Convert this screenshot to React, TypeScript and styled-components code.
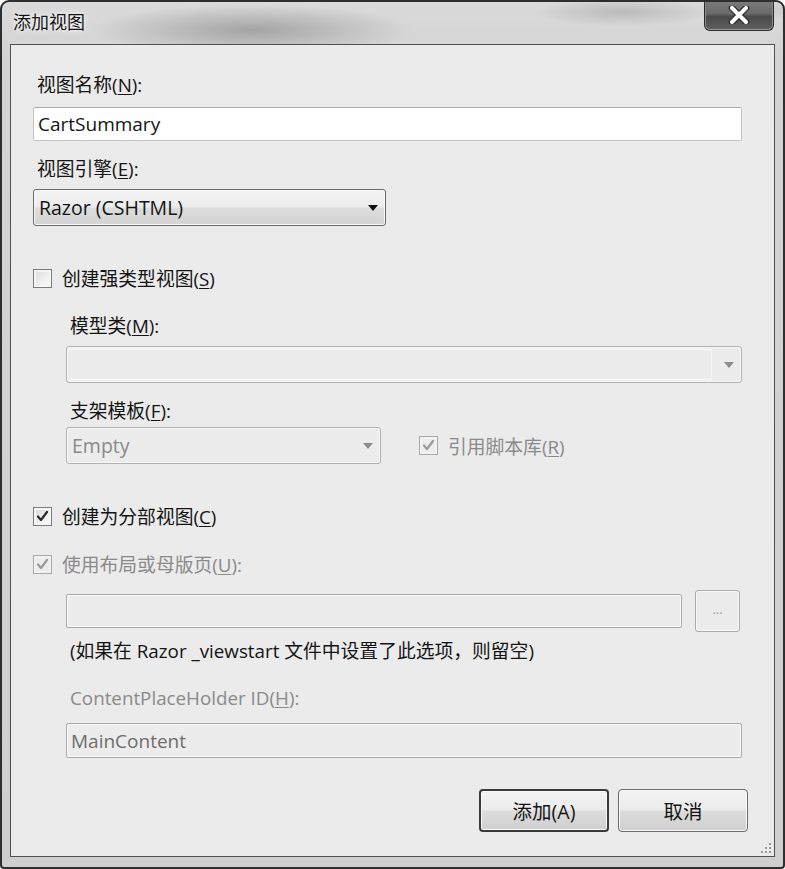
import React from "react";
import styled, { createGlobalStyle, css } from "styled-components";

const Global = createGlobalStyle`
  html, body { margin: 0; padding: 0; background: #ffffff; }
  body { font-family: "Open Sans", "Noto Sans CJK SC", sans-serif; }
  * { box-sizing: border-box; }
`;

const FONT = `"Open Sans", "Noto Sans CJK SC", sans-serif`;

const Window = styled.div`
  position: relative;
  width: 785px;
  height: 869px;
  display: flex;
  flex-direction: column;
  border: 2px solid #2e2e2e;
  border-radius: 9px 9px 4px 4px;
  background:
    radial-gradient(ellipse 160px 26px at 250px 28px, rgba(130,130,130,0.6), rgba(130,130,130,0) 100%),
    radial-gradient(ellipse 90px 14px at 620px 10px, rgba(150,150,150,0.45), rgba(150,150,150,0) 100%),
    radial-gradient(ellipse 200px 10px at 900px 8px, rgba(150,150,150,0.4), rgba(150,150,150,0) 100%),
    linear-gradient(180deg, #dadada 0%, #d3d3d3 60px, #cfcfcf 100%);
  overflow: hidden;
  font-family: ${FONT};
`;

const TitleBar = styled.div`
  height: 42px;
  flex: none;
  display: flex;
  align-items: flex-start;
  justify-content: space-between;
  padding-left: 11px;
  padding-right: 9px;
`;

const Title = styled.div`
  margin-top: 8px;
  font-size: 18px;
  line-height: 24px;
  color: #141414;
  text-shadow: 0 0 6px #f4f4f4, 0 0 3px #ffffff;
`;

const CloseButton = styled.div`
  margin-top: -2px;
  width: 70px;
  height: 31px;
  border: 1px solid #2a2a2a;
  border-top: none;
  border-radius: 0 0 6px 6px;
  background: linear-gradient(180deg, #7c7c7c 0%, #6a6a6a 45%, #4a4a4a 55%, #5e5e5e 100%);
  box-shadow: inset 0 -1px 0 #9a9a9a, inset 1px 0 0 #8a8a8a, inset -1px 0 0 #8a8a8a;
  display: flex;
  align-items: center;
  justify-content: center;
`;

const Client = styled.div`
  position: relative;
  flex: 1;
  margin: 0 8px 10px 8px;
  border: 1px solid #505050;
  background: #ebebeb;
  padding: 28px 32px 0 22px;
  display: flex;
  flex-direction: column;
  color: #141414;
`;

const Label = styled.div<{ $top: number; $disabled?: boolean; $indent?: number }>`
  margin-top: ${(p) => p.$top}px;
  margin-left: ${(p) => (p.$indent ?? 0) + 4}px;
  height: 24px;
  font-size: 18.8px;
  line-height: 24px;
  color: ${(p) => (p.$disabled ? "#8a8a8a" : "#141414")};
  white-space: nowrap;
`;

const Key = styled.span`
  text-decoration: underline;
  text-underline-offset: 2px;
`;

const TextInput = styled.div<{ $top: number; $disabled?: boolean; $indent?: number; $h: number; $w?: number }>`
  margin-top: ${(p) => p.$top}px;
  margin-left: ${(p) => p.$indent ?? 0}px;
  height: ${(p) => p.$h}px;
  ${(p) => (p.$w ? `width: ${p.$w}px;` : "")}
  flex: none;
  display: flex;
  align-items: center;
  padding-left: 4px;
  font-size: 19px;
  border-radius: 2px;
  ${(p) =>
    p.$disabled
      ? css`
          border: 1px solid #a9a9a9;
          background: #ececec;
          box-shadow: inset 0 0 0 1px #fafafa;
          color: #6e6e6e;
        `
      : css`
          border: 1px solid #c4c4c4;
          border-top-color: #a9a9a9;
          background: #ffffff;
          color: #141414;
        `}
`;

const Select = styled.div<{ $top: number; $disabled?: boolean; $indent?: number; $w?: number }>`
  margin-top: ${(p) => p.$top}px;
  margin-left: ${(p) => p.$indent ?? 0}px;
  height: 37px;
  ${(p) => (p.$w ? `width: ${p.$w}px;` : "")}
  flex: none;
  display: flex;
  align-items: center;
  justify-content: space-between;
  padding: 0 7px 0 5px;
  font-size: 19.5px;
  border-radius: 3px;
  ${(p) =>
    p.$disabled
      ? css`
          border: 1px solid #b2b2b2;
          background: #ececec;
          box-shadow: inset 0 0 0 1px #f7f7f7;
          color: #8a8a8a;
        `
      : css`
          border: 1px solid #6a6a6a;
          background: linear-gradient(180deg, #f4f4f4 0%, #ececec 48%, #dddddd 52%, #d3d3d3 100%);
          box-shadow: inset 0 0 0 1px #f8f8f8;
          color: #141414;
        `}
`;

const ComboField = styled.div`
  flex: 1;
  align-self: stretch;
  margin: 2px 12px 2px -3px;
  border-right: 1px solid #f4f4f4;
  box-shadow: inset 0 1px 0 #fbfbfb, inset 0 -1px 0 #fbfbfb;
`;

const Arrow = styled.span<{ $disabled?: boolean }>`
  width: 0;
  height: 0;
  border-left: 5px solid transparent;
  border-right: 5px solid transparent;
  border-top: 6px solid ${(p) => (p.$disabled ? "#8c8c8c" : "#101010")};
`;

const CheckRow = styled.div<{ $top: number; $disabled?: boolean; $left?: number }>`
  margin-top: ${(p) => p.$top}px;
  margin-left: ${(p) => p.$left ?? 0}px;
  height: 24px;
  display: flex;
  align-items: center;
  gap: 10px;
  font-size: 18.8px;
  color: ${(p) => (p.$disabled ? "#8a8a8a" : "#141414")};
  white-space: nowrap;
`;

const Box = styled.span<{ $disabled?: boolean }>`
  width: 19px;
  height: 19px;
  flex: none;
  border: 1px solid ${(p) => (p.$disabled ? "#a8a8a8" : "#7c7c7c")};
  background: ${(p) =>
    p.$disabled ? "#ececec" : "linear-gradient(135deg, #d8d8d8 0%, #f0f0f0 60%, #fafafa 100%)"};
  box-shadow: inset 0 0 0 2px ${(p) => (p.$disabled ? "#f2f2f2" : "#f6f6f6")};
  display: flex;
  align-items: center;
  justify-content: center;
`;

const Row = styled.div<{ $top: number; $indent?: number }>`
  margin-top: ${(p) => p.$top}px;
  margin-left: ${(p) => p.$indent ?? 0}px;
  display: flex;
  align-items: center;
`;

const BrowseButton = styled.div`
  margin-left: 13px;
  width: 45px;
  height: 42px;
  flex: none;
  border: 1px solid #ababab;
  border-radius: 3px;
  background: #ececec;
  box-shadow: inset 0 0 0 1px #f8f8f8;
  color: #9a9a9a;
  font-size: 13px;
  display: flex;
  align-items: center;
  justify-content: center;
  padding-bottom: 4px;
`;

const Buttons = styled.div`
  margin-top: 31px;
  margin-right: -6px;
  display: flex;
  justify-content: flex-end;
  gap: 9px;
`;

const Button = styled.div<{ $default?: boolean }>`
  width: 130px;
  height: 43px;
  border-radius: 4px;
  border: ${(p) => (p.$default ? "2px solid #3a3a3a" : "1px solid #6a6a6a")};
  background: linear-gradient(180deg, #f3f3f3 0%, #ebebeb 48%, #dcdcdc 52%, #cfcfcf 100%);
  box-shadow: inset 0 0 0 1px #fafafa;
  display: flex;
  align-items: center;
  justify-content: center;
  font-size: 19.5px;
  color: #141414;
`;

const Grip = styled.svg`
  position: absolute;
  right: 2px;
  bottom: 2px;
`;

const Check = ({ disabled }: { disabled?: boolean }) => (
  <svg width="13" height="13" viewBox="0 0 13 13">
    <path
      d="M2 6.5 L5 10 L11 2"
      fill="none"
      stroke={disabled ? "#9a9a9a" : "#2a2a2a"}
      strokeWidth="2.2"
      strokeLinecap="round"
      strokeLinejoin="round"
    />
  </svg>
);

export default function App() {
  return (
    <>
      <Global />
      <Window>
        <TitleBar>
          <Title>添加视图</Title>
          <CloseButton>
            <svg width="22" height="18" viewBox="0 0 22 18">
              <path d="M4 2 L18 16 M18 2 L4 16" stroke="#2a2a2a" strokeWidth="6.5" strokeLinecap="round" />
              <path d="M4 2 L18 16 M18 2 L4 16" stroke="#ffffff" strokeWidth="4" strokeLinecap="round" />
            </svg>
          </CloseButton>
        </TitleBar>
        <Client>
          <Label $top={0}>
            视图名称(<Key>N</Key>):
          </Label>
          <TextInput $top={10} $h={34}>
            CartSummary
          </TextInput>
          <Label $top={16}>
            视图引擎(<Key>E</Key>):
          </Label>
          <Select $top={8} $w={353}>
            <span>Razor (CSHTML)</span>
            <Arrow />
          </Select>

          <CheckRow $top={40}>
            <Box />
            <span>
              创建强类型视图(<Key>S</Key>)
            </span>
          </CheckRow>
          <Label $top={24} $indent={33}>
            模型类(<Key>M</Key>):
          </Label>
          <Select $top={8} $indent={33} $disabled>
            <ComboField />
            <Arrow $disabled />
          </Select>
          <Label $top={16} $indent={33}>
            支架模板(<Key>F</Key>):
          </Label>
          <Row $top={4} $indent={33}>
            <Select $top={0} $w={315} $disabled>
              <span>Empty</span>
              <Arrow $disabled />
            </Select>
            <CheckRow $top={0} $disabled $left={38}>
              <Box $disabled>
                <Check disabled />
              </Box>
              <span>
                引用脚本库(<Key>R</Key>)
              </span>
            </CheckRow>
          </Row>

          <CheckRow $top={40}>
            <Box>
              <Check />
            </Box>
            <span>
              创建为分部视图(<Key>C</Key>)
            </span>
          </CheckRow>
          <CheckRow $top={24} $disabled>
            <Box $disabled>
              <Check disabled />
            </Box>
            <span>
              使用布局或母版页(<Key>U</Key>):
            </span>
          </CheckRow>
          <Row $top={14} $indent={33}>
            <TextInput $top={0} $h={34} $w={616} $disabled />
            <BrowseButton>...</BrowseButton>
          </Row>
          <Label $top={7} $indent={33}>
            (如果在 Razor _viewstart 文件中设置了此选项，则留空)
          </Label>
          <Label $top={23} $indent={33} $disabled>
            ContentPlaceHolder ID(<Key>H</Key>):
          </Label>
          <TextInput $top={13} $h={35} $indent={33} $disabled>
            MainContent
          </TextInput>
          <Buttons>
            <Button $default>添加(A)</Button>
            <Button>取消</Button>
          </Buttons>
          <Grip width="12" height="12" viewBox="0 0 12 12">
            {[
              [9, 1],
              [9, 5],
              [5, 5],
              [9, 9],
              [5, 9],
              [1, 9],
            ].map(([x, y], i) => (
              <rect key={i} x={x} y={y} width="2" height="2" fill="#9a9a9a" />
            ))}
          </Grip>
        </Client>
      </Window>
    </>
  );
}
